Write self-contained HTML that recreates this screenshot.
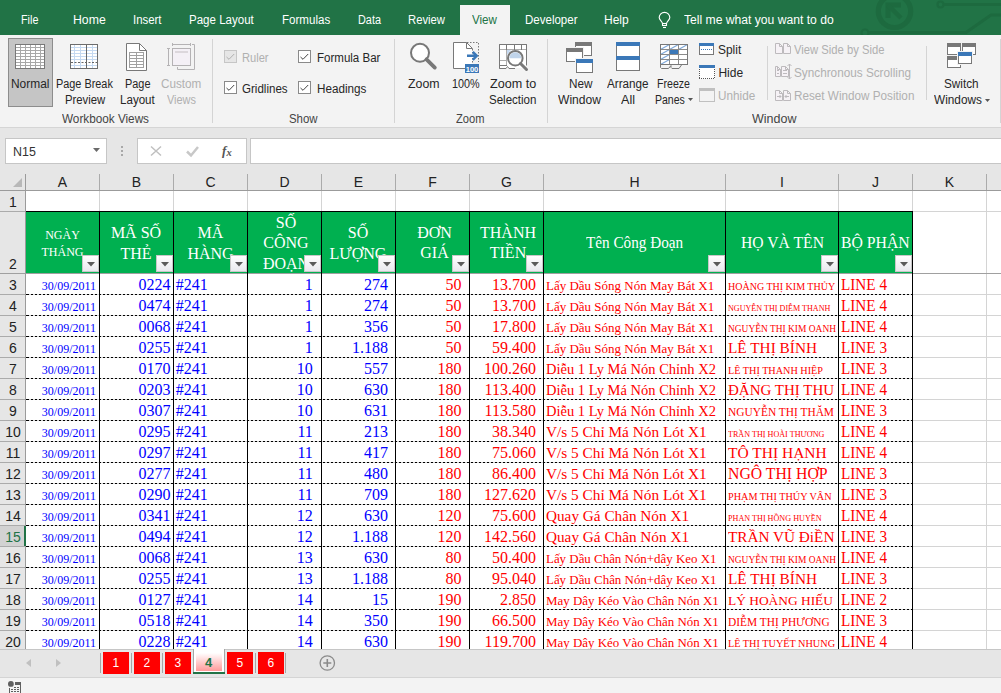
<!DOCTYPE html>
<html><head><meta charset="utf-8"><style>
html,body{margin:0;padding:0;}
body{width:1001px;height:693px;overflow:hidden;position:relative;background:#fff;font-family:"Liberation Sans",sans-serif;}
.t{position:absolute;white-space:nowrap;line-height:1;transform-origin:0 0;}
svg{overflow:visible}
</style></head><body>
<div style="position:absolute;left:0px;top:0px;width:1001px;height:35px;background:#217346"></div>
<div style="position:absolute;left:0px;top:35px;width:1001px;height:92px;background:#f3f3f3"></div>
<div style="position:absolute;left:0px;top:127px;width:1001px;height:1px;background:#d5d5d5"></div>
<div style="position:absolute;left:0px;top:128px;width:1001px;height:46px;background:#e6e6e6"></div>
<div style="position:absolute;left:460px;top:5px;width:50px;height:30px;background:#f3f3f3"></div>
<div class="t" style="left:20.70px;top:14.00px;font-size:12.5px;color:#fff;transform:scaleX(0.8635);">File</div>
<div class="t" style="left:73.40px;top:14.00px;font-size:12.5px;color:#fff;transform:scaleX(0.9805);">Home</div>
<div class="t" style="left:133.20px;top:14.00px;font-size:12.5px;color:#fff;transform:scaleX(0.9120);">Insert</div>
<div class="t" style="left:189.20px;top:14.00px;font-size:12.5px;color:#fff;transform:scaleX(0.9231);">Page Layout</div>
<div class="t" style="left:281.60px;top:14.00px;font-size:12.5px;color:#fff;transform:scaleX(0.9251);">Formulas</div>
<div class="t" style="left:357.50px;top:14.00px;font-size:12.5px;color:#fff;transform:scaleX(0.8696);">Data</div>
<div class="t" style="left:408.00px;top:14.00px;font-size:12.5px;color:#fff;transform:scaleX(0.9013);">Review</div>
<div class="t" style="left:524.50px;top:14.00px;font-size:12.5px;color:#fff;transform:scaleX(0.9211);">Developer</div>
<div class="t" style="left:604.30px;top:14.00px;font-size:12.5px;color:#fff;transform:scaleX(0.9611);">Help</div>
<div class="t" style="left:684.30px;top:14.00px;font-size:12.5px;color:#fff;transform:scaleX(0.9705);">Tell me what you want to do</div>
<div class="t" style="left:472.00px;top:14.00px;font-size:12.5px;color:#217346;transform:scaleX(0.9276);">View</div>
<div style="position:absolute;left:5px;top:138px;width:100px;height:24px;background:#fff;border:1px solid #c6c6c6"></div>
<div style="position:absolute;left:137px;top:138px;width:108px;height:24px;background:#fff;border:1px solid #c6c6c6"></div>
<div style="position:absolute;left:250px;top:138px;width:760px;height:24px;background:#fff;border:1px solid #c6c6c6"></div>
<div class="t" style="left:12.80px;top:146.00px;font-size:12px;color:#333;transform:scaleX(1.0364);">N15</div>
<svg style="position:absolute;left:93px;top:148px" width="7" height="4" viewBox="0 0 7 4"><path d="M0 0 H7 L3.5 4 Z" fill="#6a6a6a"/></svg>
<div style="position:absolute;left:121px;top:146px;width:2px;height:2px;background:#a8a8a8"></div>
<div style="position:absolute;left:121px;top:150px;width:2px;height:2px;background:#a8a8a8"></div>
<div style="position:absolute;left:121px;top:154px;width:2px;height:2px;background:#a8a8a8"></div>
<svg style="position:absolute;left:150px;top:146px" width="12" height="10" viewBox="0 0 12 10"><path d="M1 0.5 L11 9.5 M11 0.5 L1 9.5" stroke="#c0c0c0" stroke-width="1.5"/></svg>
<svg style="position:absolute;left:186px;top:146px" width="13" height="11" viewBox="0 0 13 11"><path d="M1 5.5 L5 9.5 L12 1" fill="none" stroke="#c8c8c8" stroke-width="2.5"/></svg>
<svg style="position:absolute;left:221px;top:144px" width="14" height="14" viewBox="0 0 14 14"><text x="1" y="10.5" font-family="Liberation Serif" font-style="italic" font-weight="bold" font-size="13" fill="#555">f</text><text x="5.6" y="11.5" font-family="Liberation Serif" font-style="italic" font-weight="bold" font-size="10.5" fill="#555">x</text></svg>
<div style="position:absolute;left:0px;top:174px;width:1001px;height:16px;background:#e6e6e6"></div>
<div style="position:absolute;left:0px;top:190px;width:1001px;height:1px;background:#9b9b9b"></div>
<div style="position:absolute;left:0px;top:191px;width:25px;height:458px;background:#e6e6e6"></div>
<div style="position:absolute;left:25px;top:174px;width:1px;height:475px;background:#9b9b9b"></div>
<div style="position:absolute;left:8px;top:38px;width:43px;height:67px;background:#c5c5c5;border:1px solid #8d8d8d"></div>
<div class="t" style="left:10.75px;top:78.00px;font-size:12px;color:#262626;transform:scaleX(0.9948);">Normal</div>
<div class="t" style="left:55.60px;top:78.00px;font-size:12px;color:#262626;transform:scaleX(0.9068);">Page Break</div>
<div class="t" style="left:64.50px;top:94.00px;font-size:12px;color:#262626;transform:scaleX(0.9415);">Preview</div>
<div class="t" style="left:124.50px;top:78.00px;font-size:12px;color:#262626;transform:scaleX(0.9091);">Page</div>
<div class="t" style="left:120.00px;top:94.00px;font-size:12px;color:#262626;transform:scaleX(0.9653);">Layout</div>
<div class="t" style="left:160.70px;top:78.00px;font-size:12px;color:#b0b0b0;transform:scaleX(0.9746);">Custom</div>
<div class="t" style="left:166.70px;top:94.00px;font-size:12px;color:#b0b0b0;transform:scaleX(0.9119);">Views</div>
<div class="t" style="left:62.40px;top:113.00px;font-size:12px;color:#444;transform:scaleX(0.9781);">Workbook Views</div>
<div style="position:absolute;left:212px;top:39px;width:1px;height:84px;background:#d4d4d4"></div>
<div style="position:absolute;left:394px;top:39px;width:1px;height:84px;background:#d4d4d4"></div>
<div style="position:absolute;left:547px;top:39px;width:1px;height:84px;background:#d4d4d4"></div>
<div style="position:absolute;left:767px;top:46px;width:1px;height:54px;background:#d4d4d4"></div>
<div style="position:absolute;left:926px;top:46px;width:1px;height:54px;background:#d4d4d4"></div>
<div style="position:absolute;left:1000px;top:39px;width:1px;height:84px;background:#d4d4d4"></div>
<div class="t" style="left:242.40px;top:52.00px;font-size:12px;color:#b0b0b0;transform:scaleX(0.9268);">Ruler</div>
<div class="t" style="left:316.60px;top:52.00px;font-size:12px;color:#262626;transform:scaleX(0.9606);">Formula Bar</div>
<div class="t" style="left:242.40px;top:83.00px;font-size:12px;color:#262626;transform:scaleX(0.9630);">Gridlines</div>
<div class="t" style="left:316.60px;top:83.00px;font-size:12px;color:#262626;transform:scaleX(0.9744);">Headings</div>
<div class="t" style="left:289.40px;top:113.00px;font-size:12px;color:#444;transform:scaleX(0.9517);">Show</div>
<div class="t" style="left:407.90px;top:78.00px;font-size:12px;color:#262626;transform:scaleX(1.0293);">Zoom</div>
<div class="t" style="left:452.40px;top:78.00px;font-size:12px;color:#262626;transform:scaleX(0.8990);">100%</div>
<div class="t" style="left:489.80px;top:78.00px;font-size:12px;color:#262626;transform:scaleX(1.0500);">Zoom to</div>
<div class="t" style="left:489.00px;top:94.00px;font-size:12px;color:#262626;transform:scaleX(0.9605);">Selection</div>
<div class="t" style="left:456.00px;top:113.00px;font-size:12px;color:#444;transform:scaleX(0.9283);">Zoom</div>
<div class="t" style="left:568.50px;top:78.00px;font-size:12px;color:#262626;transform:scaleX(0.9771);">New</div>
<div class="t" style="left:558.40px;top:94.00px;font-size:12px;color:#262626;transform:scaleX(1.0070);">Window</div>
<div class="t" style="left:607.00px;top:78.00px;font-size:12px;color:#262626;transform:scaleX(0.9742);">Arrange</div>
<div class="t" style="left:621.00px;top:94.00px;font-size:12px;color:#262626;transform:scaleX(1.0487);">All</div>
<div class="t" style="left:657.00px;top:78.00px;font-size:12px;color:#262626;transform:scaleX(0.8835);">Freeze</div>
<div class="t" style="left:654.50px;top:94.00px;font-size:12px;color:#262626;transform:scaleX(0.8752);">Panes</div>
<div class="t" style="left:717.80px;top:44.00px;font-size:12px;color:#262626;transform:scaleX(0.9936);">Split</div>
<div class="t" style="left:718.40px;top:67.00px;font-size:12px;color:#262626;">Hide</div>
<div class="t" style="left:718.40px;top:90.00px;font-size:12px;color:#b0b0b0;transform:scaleX(0.9777);">Unhide</div>
<div class="t" style="left:794.30px;top:44.00px;font-size:12px;color:#b0b0b0;transform:scaleX(0.9378);">View Side by Side</div>
<div class="t" style="left:794.30px;top:67.00px;font-size:12px;color:#b0b0b0;transform:scaleX(0.9799);">Synchronous Scrolling</div>
<div class="t" style="left:794.30px;top:90.00px;font-size:12px;color:#b0b0b0;transform:scaleX(0.9757);">Reset Window Position</div>
<div class="t" style="left:944.00px;top:78.00px;font-size:12px;color:#262626;transform:scaleX(0.9788);">Switch</div>
<div class="t" style="left:933.70px;top:94.00px;font-size:12px;color:#262626;transform:scaleX(0.9836);">Windows</div>
<div class="t" style="left:751.80px;top:113.00px;font-size:12px;color:#444;transform:scaleX(1.0422);">Window</div>
<svg style="position:absolute;left:15px;top:44px" width="30" height="25" viewBox="0 0 30 25"><rect x="0.5" y="0.5" width="29" height="24" fill="#fff" stroke="#787878"/><line x1="5.5" y1="0" x2="5.5" y2="25" stroke="#a8a8a8"/><line x1="10.5" y1="0" x2="10.5" y2="25" stroke="#a8a8a8"/><line x1="15.5" y1="0" x2="15.5" y2="25" stroke="#a8a8a8"/><line x1="20.5" y1="0" x2="20.5" y2="25" stroke="#a8a8a8"/><line x1="25.5" y1="0" x2="25.5" y2="25" stroke="#a8a8a8"/><line x1="0" y1="3.5" x2="30" y2="3.5" stroke="#a8a8a8"/><line x1="0" y1="6.5" x2="30" y2="6.5" stroke="#a8a8a8"/><line x1="0" y1="9.5" x2="30" y2="9.5" stroke="#a8a8a8"/><line x1="0" y1="12.5" x2="30" y2="12.5" stroke="#a8a8a8"/><line x1="0" y1="15.5" x2="30" y2="15.5" stroke="#a8a8a8"/><line x1="0" y1="18.5" x2="30" y2="18.5" stroke="#a8a8a8"/><line x1="0" y1="21.5" x2="30" y2="21.5" stroke="#a8a8a8"/><rect x="0.5" y="0.5" width="29" height="24" fill="none" stroke="#787878"/></svg>
<svg style="position:absolute;left:70px;top:44px" width="28" height="25" viewBox="0 0 28 25"><rect x="0.5" y="0.5" width="27" height="24" fill="#fff"/><line x1="4.5" y1="0" x2="4.5" y2="25" stroke="#c5d9f1"/><line x1="10.5" y1="0" x2="10.5" y2="25" stroke="#c5d9f1"/><line x1="22.5" y1="0" x2="22.5" y2="25" stroke="#c5d9f1"/><line x1="0" y1="3.5" x2="28" y2="3.5" stroke="#c5d9f1"/><line x1="0" y1="6.5" x2="28" y2="6.5" stroke="#c5d9f1"/><line x1="0" y1="9.5" x2="28" y2="9.5" stroke="#c5d9f1"/><line x1="0" y1="12.5" x2="28" y2="12.5" stroke="#c5d9f1"/><line x1="0" y1="15.5" x2="28" y2="15.5" stroke="#c5d9f1"/><line x1="0" y1="21.5" x2="28" y2="21.5" stroke="#c5d9f1"/><line x1="16.5" y1="0" x2="16.5" y2="25" stroke="#666"/><line x1="1" y1="18.5" x2="27" y2="18.5" stroke="#666" stroke-dasharray="2,1.5"/><rect x="0.5" y="0.5" width="27" height="24" fill="none" stroke="#6d6d6d"/></svg>
<svg style="position:absolute;left:126px;top:43px" width="21" height="28" viewBox="0 0 21 28"><path d="M0.5 0.5 H13.5 L20.5 7.5 V27.5 H0.5 Z" fill="#fff" stroke="#787878"/><path d="M13.5 0.5 V7.5 H20.5" fill="none" stroke="#787878"/><rect x="3.5" y="9.5" width="14" height="15" fill="#fff" stroke="#a0a0a0"/><line x1="10.5" y1="9" x2="10.5" y2="25" stroke="#a0a0a0"/><line x1="3" y1="12.5" x2="18" y2="12.5" stroke="#a0a0a0"/><line x1="3" y1="15.5" x2="18" y2="15.5" stroke="#a0a0a0"/><line x1="3" y1="18.5" x2="18" y2="18.5" stroke="#a0a0a0"/><line x1="3" y1="21.5" x2="18" y2="21.5" stroke="#a0a0a0"/></svg>
<svg style="position:absolute;left:166px;top:42px" width="30" height="28" viewBox="0 0 30 28"><rect x="6.5" y="6.5" width="18" height="17" fill="#f4f0f6" stroke="#b4b2b4"/><rect x="9" y="9" width="13" height="2" fill="#dcd7dc"/><path d="M6.5 2.5 H24.5 M6.5 1 V4 M24.5 1 V4" fill="none" stroke="#b4b2b4"/><path d="M2.5 6.5 V23.5 M1 6.5 H4 M1 23.5 H4" fill="none" stroke="#b4b2b4"/><path d="M26 2.5 H28.5 V27.5 H11.5 V25" fill="none" stroke="#b4b2b4"/></svg>
<svg style="position:absolute;left:224px;top:50px" width="13" height="13" viewBox="0 0 13 13"><rect x="0.5" y="0.5" width="12" height="12" fill="#e6e6e6" stroke="#c6c6c6"/><path d="M2.5 7 L5 9.3 L10.2 4" fill="none" stroke="#b0b0b0" stroke-width="1"/></svg>
<svg style="position:absolute;left:298px;top:50px" width="13" height="13" viewBox="0 0 13 13"><rect x="0.5" y="0.5" width="12" height="12" fill="#fff" stroke="#8a8a8a"/><path d="M2.5 7 L5 9.3 L10.2 4" fill="none" stroke="#444" stroke-width="1"/></svg>
<svg style="position:absolute;left:224px;top:81px" width="13" height="13" viewBox="0 0 13 13"><rect x="0.5" y="0.5" width="12" height="12" fill="#fff" stroke="#8a8a8a"/><path d="M2.5 7 L5 9.3 L10.2 4" fill="none" stroke="#444" stroke-width="1"/></svg>
<svg style="position:absolute;left:298px;top:81px" width="13" height="13" viewBox="0 0 13 13"><rect x="0.5" y="0.5" width="12" height="12" fill="#fff" stroke="#8a8a8a"/><path d="M2.5 7 L5 9.3 L10.2 4" fill="none" stroke="#444" stroke-width="1"/></svg>
<svg style="position:absolute;left:409px;top:42px" width="28" height="28" viewBox="0 0 28 28"><circle cx="11" cy="10.8" r="9" fill="#fff" stroke="#787878" stroke-width="2"/><line x1="17.5" y1="17.3" x2="25.8" y2="25.6" stroke="#787878" stroke-width="3.8" stroke-linecap="round"/></svg>
<svg style="position:absolute;left:452px;top:41px" width="30" height="33" viewBox="0 0 30 33"><path d="M1.5 1.5 H14.5 L20.5 7.5 V27.5 H1.5 Z" fill="#fff"/><path d="M13 27.5 H1.5 V1.5 H14.5 L20.5 7.5" fill="none" stroke="#787878"/><path d="M14.5 1.5 V7.5 H20.5" fill="none" stroke="#787878"/><path d="M15 1.5 H26.5 V21 M20.5 8 V23" fill="none" stroke="#787878" stroke-dasharray="1.5,1.5"/><path d="M15 14.8 H24.5 M20.8 10.8 L24.8 14.8 L20.8 18.8" fill="none" stroke="#3b78b8" stroke-width="2.4"/><rect x="13" y="23" width="14" height="9" fill="#3b78b8"/><text x="20" y="30.6" font-size="7.5" font-weight="bold" text-anchor="middle" fill="#fff" font-family="Liberation Sans">100</text></svg>
<svg style="position:absolute;left:499px;top:44px" width="30" height="28" viewBox="0 0 30 28"><path d="M0.5 24.5 V0.5 H27.5 V21" fill="#fff" stroke="#787878"/><rect x="1" y="1" width="26" height="23" fill="#fff"/><path d="M0.5 24.5 V0.5 H27.5 V21.5 M0.5 24.5 H7 L8.5 22.5 L10 24.5 H16" fill="none" stroke="#787878"/><line x1="7.5" y1="1" x2="7.5" y2="6" stroke="#787878"/><line x1="15.5" y1="1" x2="15.5" y2="6" stroke="#787878"/><line x1="22.5" y1="1" x2="22.5" y2="6" stroke="#787878"/><line x1="1" y1="5.5" x2="27" y2="5.5" stroke="#787878" stroke-opacity="0.6"/><line x1="1" y1="16.5" x2="7" y2="16.5" stroke="#787878" stroke-opacity="0.6"/><line x1="1" y1="21.5" x2="8" y2="21.5" stroke="#787878"/><line x1="7.5" y1="6" x2="7.5" y2="21" stroke="#787878" stroke-opacity="0.6"/><path d="M8 6 H12 L8 11 Z" fill="#c5d9f1"/><circle cx="16.3" cy="14.2" r="7.3" fill="#fff" stroke="#787878" stroke-width="2"/><path d="M10.3 14.2 A6 6 0 0 1 22.3 14.2 Z" fill="#c0d4ea"/><line x1="21.5" y1="19.5" x2="27.5" y2="25.5" stroke="#787878" stroke-width="3" stroke-linecap="round"/></svg>
<svg style="position:absolute;left:565px;top:41px" width="30" height="33" viewBox="0 0 30 33"><rect x="10.5" y="1.5" width="16" height="13" fill="#fff" stroke="#787878"/><rect x="10" y="1" width="17" height="4" fill="#787878"/><rect x="0" y="6" width="19" height="16" fill="#f3f3f3"/><rect x="1.5" y="7.5" width="16" height="13" fill="#fff" stroke="#787878"/><rect x="1" y="7" width="17" height="4" fill="#787878"/><rect x="10" y="17" width="19" height="16" fill="#f3f3f3"/><rect x="11.5" y="18.5" width="16" height="13" fill="#fff" stroke="#787878"/><rect x="11" y="18" width="17" height="4" fill="#3b78b8"/></svg>
<svg style="position:absolute;left:616px;top:42px" width="24" height="29" viewBox="0 0 24 29"><rect x="0.5" y="0.5" width="23" height="28" fill="#fff" stroke="#787878"/><rect x="0" y="0" width="24" height="4" fill="#3b78b8"/><rect x="0" y="14" width="24" height="4" fill="#3b78b8"/></svg>
<svg style="position:absolute;left:660px;top:44px" width="28" height="26" viewBox="0 0 28 26"><rect x="0.5" y="0.5" width="27" height="20" fill="#fff"/><rect x="10" y="6" width="8" height="4" fill="#3b78b8"/><line x1="0.5" y1="5.5" x2="9.5" y2="0.5" stroke="#7ea7d8" stroke-width="1.1"/><line x1="9.5" y1="5.5" x2="18.5" y2="0.5" stroke="#7ea7d8" stroke-width="1.1"/><line x1="18.5" y1="5.5" x2="27.5" y2="0.5" stroke="#7ea7d8" stroke-width="1.1"/><line x1="0.5" y1="10.5" x2="9.5" y2="5.5" stroke="#7ea7d8" stroke-width="1.1"/><line x1="0.5" y1="15.5" x2="9.5" y2="10.5" stroke="#7ea7d8" stroke-width="1.1"/><line x1="0.5" y1="20.5" x2="9.5" y2="15.5" stroke="#7ea7d8" stroke-width="1.1"/><line x1="9.5" y1="0" x2="9.5" y2="21" stroke="#8a8a8a"/><line x1="18.5" y1="0" x2="18.5" y2="21" stroke="#8a8a8a"/><line x1="0" y1="5.5" x2="28" y2="5.5" stroke="#8a8a8a"/><line x1="0" y1="10.5" x2="28" y2="10.5" stroke="#8a8a8a"/><line x1="0" y1="15.5" x2="28" y2="15.5" stroke="#8a8a8a"/><rect x="0.5" y="0.5" width="27" height="20" fill="none" stroke="#787878"/><path d="M0.5 21 V23.5 L1.5 24.5 H8.5 L11 21.5 M11 21.5 V23.5 L12 24.5 H19 L21.5 21" fill="none" stroke="#787878"/></svg>
<svg style="position:absolute;left:699px;top:43px" width="15" height="12" viewBox="0 0 15 12"><rect x="0.5" y="0.5" width="14" height="11" fill="#fff" stroke="#787878"/><rect x="0" y="0" width="15" height="3" fill="#3b78b8"/><line x1="2" y1="6.5" x2="13" y2="6.5" stroke="#3b78b8" stroke-dasharray="1,1"/></svg>
<svg style="position:absolute;left:699px;top:65px" width="16" height="14" viewBox="0 0 16 14"><rect x="0" y="0" width="16" height="14" fill="#fff"/><rect x="0" y="0" width="16" height="3" fill="#3b78b8"/><rect x="0" y="13" width="1" height="1" fill="#555"/><rect x="2" y="13" width="1" height="1" fill="#555"/><rect x="4" y="13" width="1" height="1" fill="#555"/><rect x="6" y="13" width="1" height="1" fill="#555"/><rect x="8" y="13" width="1" height="1" fill="#555"/><rect x="10" y="13" width="1" height="1" fill="#555"/><rect x="12" y="13" width="1" height="1" fill="#555"/><rect x="14" y="13" width="1" height="1" fill="#555"/><rect x="0" y="4" width="1" height="1" fill="#555"/><rect x="15" y="4" width="1" height="1" fill="#555"/><rect x="0" y="6" width="1" height="1" fill="#555"/><rect x="15" y="6" width="1" height="1" fill="#555"/><rect x="0" y="8" width="1" height="1" fill="#555"/><rect x="15" y="8" width="1" height="1" fill="#555"/><rect x="0" y="10" width="1" height="1" fill="#555"/><rect x="15" y="10" width="1" height="1" fill="#555"/><rect x="0" y="12" width="1" height="1" fill="#555"/><rect x="15" y="12" width="1" height="1" fill="#555"/></svg>
<svg style="position:absolute;left:699px;top:88px" width="16" height="14" viewBox="0 0 16 14"><rect x="0.5" y="0.5" width="15" height="13" fill="none" stroke="#c0c0c0"/><rect x="0" y="0" width="16" height="3" fill="#c0c0c0"/></svg>
<svg style="position:absolute;left:775px;top:43px" width="16" height="11" viewBox="0 0 16 11"><path d="M0.5 0.5 H4.5 L7.5 3.5 V10.5 H0.5 Z" fill="#f6f2f6" stroke="#bdbabd"/><path d="M4.5 0.5 V3.5 H7.5" fill="none" stroke="#bdbabd"/><path d="M8.5 0.5 H12.5 L15.5 3.5 V10.5 H8.5 Z" fill="#f6f2f6" stroke="#bdbabd"/><path d="M12.5 0.5 V3.5 H15.5" fill="none" stroke="#bdbabd"/></svg>
<svg style="position:absolute;left:775px;top:66px" width="17" height="11" viewBox="0 0 17 11"><path d="M0.5 0.5 H2.5 L5.5 3.5 V10.5 H0.5 Z" fill="#f6f2f6" stroke="#bdbabd"/><path d="M2.5 0.5 V3.5 H5.5" fill="none" stroke="#bdbabd"/><path d="M6.5 0.5 H10.5 L13.5 3.5 V10.5 H6.5 Z" fill="#f6f2f6" stroke="#bdbabd"/><path d="M10.5 0.5 V3.5 H13.5" fill="none" stroke="#bdbabd"/><path d="M14.5 -2 V13 M12.5 0 L14.5 -2 L16.5 0 M12.5 11 L14.5 13 L16.5 11" fill="none" stroke="#bdbabd"/><line x1="2" y1="4.5" x2="4" y2="4.5" stroke="#bdbabd"/><line x1="8" y1="4.5" x2="12" y2="4.5" stroke="#bdbabd"/><line x1="2" y1="7.5" x2="4" y2="7.5" stroke="#bdbabd"/><line x1="8" y1="7.5" x2="12" y2="7.5" stroke="#bdbabd"/></svg>
<svg style="position:absolute;left:775px;top:90px" width="16" height="11" viewBox="0 0 16 11"><path d="M0.5 0.5 H4.5 L7.5 3.5 V10.5 H0.5 Z" fill="#f6f2f6" stroke="#bdbabd"/><path d="M4.5 0.5 V3.5 H7.5" fill="none" stroke="#bdbabd"/><path d="M8.5 0.5 H12.5 L15.5 3.5 V10.5 H8.5 Z" fill="#f6f2f6" stroke="#bdbabd"/><path d="M12.5 0.5 V3.5 H15.5" fill="none" stroke="#bdbabd"/><path d="M2 6.5 H6 M4.5 5 L6 6.5 L4.5 8 M10 6.5 H14 M11.5 5 L10 6.5 L11.5 8" fill="none" stroke="#bdbabd"/></svg>
<svg style="position:absolute;left:947px;top:43px" width="30" height="26" viewBox="0 0 30 26"><rect x="0.5" y="0.5" width="13" height="11" fill="#fff" stroke="#787878"/><rect x="0" y="0" width="14" height="4" fill="#787878"/><rect x="15.5" y="0.5" width="13" height="11" fill="#fff" stroke="#787878"/><rect x="15" y="0" width="14" height="4" fill="#787878"/><rect x="0.5" y="13.5" width="13" height="11" fill="#fff" stroke="#787878"/><rect x="0" y="13" width="14" height="4" fill="#787878"/><rect x="10" y="8" width="16" height="14" fill="#f3f3f3"/><rect x="11.5" y="9.5" width="13" height="11" fill="#fff" stroke="#787878"/><rect x="11" y="9" width="14" height="4" fill="#3b78b8"/></svg>
<svg style="position:absolute;left:688px;top:98px" width="5" height="3" viewBox="0 0 5 3"><path d="M0 0 H5 L2.5 3 Z" fill="#555"/></svg>
<svg style="position:absolute;left:985px;top:99px" width="5" height="3" viewBox="0 0 5 3"><path d="M0 0 H5 L2.5 3 Z" fill="#555"/></svg>
<svg style="position:absolute;left:658px;top:11px" width="13" height="18" viewBox="0 0 13 18"><path d="M4.5 12.5 C4.2 10.6 1.2 8.8 1.2 6.6 A5.3 5.3 0 0 1 11.8 6.6 C11.8 8.8 8.8 10.6 8.5 12.5" fill="none" stroke="#fff" stroke-width="1.15"/><rect x="4.5" y="12.5" width="4" height="2" fill="none" stroke="#fff" stroke-width="1.1"/><path d="M5 16.5 H8" stroke="#fff" stroke-width="1.1"/></svg>
<div style="position:absolute;left:850px;top:0;width:151px;height:35px;overflow:hidden"><svg width="151" height="35"><circle cx="44.5" cy="11.3" r="16.2" fill="none" stroke="#1d6a3f" stroke-width="5.2"/><path d="M35.5 2.5 H51 V7.5 H40.5 V18 H35.5 Z" fill="#1d6a3f"/><path d="M38 5 L51 18" fill="none" stroke="#1d6a3f" stroke-width="4.5"/><circle cx="90.5" cy="4.5" r="3" fill="none" stroke="#1d6a3f" stroke-width="2.2"/><path d="M93.5 4.5 H160" fill="none" stroke="#1d6a3f" stroke-width="3.2"/><circle cx="15" cy="33" r="3.5" fill="none" stroke="#1d6a3f" stroke-width="2.2"/><path d="M18 32.5 H116 L141 15 H160" fill="none" stroke="#1d6a3f" stroke-width="3"/></svg></div>
<div style="position:absolute;left:99px;top:191px;width:1px;height:458px;background:#d4d4d4"></div>
<div style="position:absolute;left:173px;top:191px;width:1px;height:458px;background:#d4d4d4"></div>
<div style="position:absolute;left:247px;top:191px;width:1px;height:458px;background:#d4d4d4"></div>
<div style="position:absolute;left:321px;top:191px;width:1px;height:458px;background:#d4d4d4"></div>
<div style="position:absolute;left:395px;top:191px;width:1px;height:458px;background:#d4d4d4"></div>
<div style="position:absolute;left:469px;top:191px;width:1px;height:458px;background:#d4d4d4"></div>
<div style="position:absolute;left:543px;top:191px;width:1px;height:458px;background:#d4d4d4"></div>
<div style="position:absolute;left:725px;top:191px;width:1px;height:458px;background:#d4d4d4"></div>
<div style="position:absolute;left:838px;top:191px;width:1px;height:458px;background:#d4d4d4"></div>
<div style="position:absolute;left:912px;top:191px;width:1px;height:458px;background:#d4d4d4"></div>
<div style="position:absolute;left:986px;top:191px;width:1px;height:458px;background:#d4d4d4"></div>
<div style="position:absolute;left:986px;top:191px;width:0px;height:0px;"></div>
<div style="position:absolute;left:26px;top:211px;width:975px;height:1px;background:#d4d4d4"></div>
<div style="position:absolute;left:26px;top:273px;width:975px;height:1px;background:#d4d4d4"></div>
<div style="position:absolute;left:26px;top:294px;width:975px;height:1px;background:#d4d4d4"></div>
<div style="position:absolute;left:26px;top:315px;width:975px;height:1px;background:#d4d4d4"></div>
<div style="position:absolute;left:26px;top:336px;width:975px;height:1px;background:#d4d4d4"></div>
<div style="position:absolute;left:26px;top:357px;width:975px;height:1px;background:#d4d4d4"></div>
<div style="position:absolute;left:26px;top:378px;width:975px;height:1px;background:#d4d4d4"></div>
<div style="position:absolute;left:26px;top:399px;width:975px;height:1px;background:#d4d4d4"></div>
<div style="position:absolute;left:26px;top:420px;width:975px;height:1px;background:#d4d4d4"></div>
<div style="position:absolute;left:26px;top:441px;width:975px;height:1px;background:#d4d4d4"></div>
<div style="position:absolute;left:26px;top:462px;width:975px;height:1px;background:#d4d4d4"></div>
<div style="position:absolute;left:26px;top:483px;width:975px;height:1px;background:#d4d4d4"></div>
<div style="position:absolute;left:26px;top:504px;width:975px;height:1px;background:#d4d4d4"></div>
<div style="position:absolute;left:26px;top:525px;width:975px;height:1px;background:#d4d4d4"></div>
<div style="position:absolute;left:26px;top:546px;width:975px;height:1px;background:#d4d4d4"></div>
<div style="position:absolute;left:26px;top:567px;width:975px;height:1px;background:#d4d4d4"></div>
<div style="position:absolute;left:26px;top:588px;width:975px;height:1px;background:#d4d4d4"></div>
<div style="position:absolute;left:26px;top:609px;width:975px;height:1px;background:#d4d4d4"></div>
<div style="position:absolute;left:26px;top:630px;width:975px;height:1px;background:#d4d4d4"></div>
<div style="position:absolute;left:26px;top:651px;width:975px;height:1px;background:#d4d4d4"></div>
<div style="position:absolute;left:99px;top:174px;width:1px;height:16px;background:#ababab"></div>
<div style="position:absolute;left:173px;top:174px;width:1px;height:16px;background:#ababab"></div>
<div style="position:absolute;left:247px;top:174px;width:1px;height:16px;background:#ababab"></div>
<div style="position:absolute;left:321px;top:174px;width:1px;height:16px;background:#ababab"></div>
<div style="position:absolute;left:395px;top:174px;width:1px;height:16px;background:#ababab"></div>
<div style="position:absolute;left:469px;top:174px;width:1px;height:16px;background:#ababab"></div>
<div style="position:absolute;left:543px;top:174px;width:1px;height:16px;background:#ababab"></div>
<div style="position:absolute;left:725px;top:174px;width:1px;height:16px;background:#ababab"></div>
<div style="position:absolute;left:838px;top:174px;width:1px;height:16px;background:#ababab"></div>
<div style="position:absolute;left:912px;top:174px;width:1px;height:16px;background:#ababab"></div>
<div style="position:absolute;left:986px;top:174px;width:1px;height:16px;background:#ababab"></div>
<div class="t" style="left:57.83px;top:175.00px;font-size:14px;color:#222;">A</div>
<div class="t" style="left:131.82px;top:175.00px;font-size:14px;color:#222;">B</div>
<div class="t" style="left:205.45px;top:175.00px;font-size:14px;color:#222;">C</div>
<div class="t" style="left:279.45px;top:175.00px;font-size:14px;color:#222;">D</div>
<div class="t" style="left:353.82px;top:175.00px;font-size:14px;color:#222;">E</div>
<div class="t" style="left:428.23px;top:175.00px;font-size:14px;color:#222;">F</div>
<div class="t" style="left:501.05px;top:175.00px;font-size:14px;color:#222;">G</div>
<div class="t" style="left:629.45px;top:175.00px;font-size:14px;color:#222;">H</div>
<div class="t" style="left:780.05px;top:175.00px;font-size:14px;color:#222;">I</div>
<div class="t" style="left:872.00px;top:175.00px;font-size:14px;color:#222;">J</div>
<div class="t" style="left:944.83px;top:175.00px;font-size:14px;color:#222;">K</div>
<div class="t" style="left:1019.10px;top:175.00px;font-size:14px;color:#222;">L</div>
<svg style="position:absolute;left:13px;top:178px" width="10" height="9" viewBox="0 0 10 9"><path d="M9 0 V9 H0 Z" fill="#b8b8b8"/></svg>
<div class="t" style="left:9.10px;top:195.00px;font-size:14px;color:#222;">1</div>
<div style="position:absolute;left:0px;top:211px;width:25px;height:1px;background:#ababab"></div>
<div class="t" style="left:9.10px;top:257.00px;font-size:14px;color:#222;">2</div>
<div style="position:absolute;left:0px;top:273px;width:25px;height:1px;background:#ababab"></div>
<div class="t" style="left:9.10px;top:278.00px;font-size:14px;color:#222;">3</div>
<div style="position:absolute;left:0px;top:294px;width:25px;height:1px;background:#ababab"></div>
<div class="t" style="left:9.10px;top:299.00px;font-size:14px;color:#222;">4</div>
<div style="position:absolute;left:0px;top:315px;width:25px;height:1px;background:#ababab"></div>
<div class="t" style="left:9.10px;top:320.00px;font-size:14px;color:#222;">5</div>
<div style="position:absolute;left:0px;top:336px;width:25px;height:1px;background:#ababab"></div>
<div class="t" style="left:9.10px;top:341.00px;font-size:14px;color:#222;">6</div>
<div style="position:absolute;left:0px;top:357px;width:25px;height:1px;background:#ababab"></div>
<div class="t" style="left:9.10px;top:362.00px;font-size:14px;color:#222;">7</div>
<div style="position:absolute;left:0px;top:378px;width:25px;height:1px;background:#ababab"></div>
<div class="t" style="left:9.10px;top:383.00px;font-size:14px;color:#222;">8</div>
<div style="position:absolute;left:0px;top:399px;width:25px;height:1px;background:#ababab"></div>
<div class="t" style="left:9.10px;top:404.00px;font-size:14px;color:#222;">9</div>
<div style="position:absolute;left:0px;top:420px;width:25px;height:1px;background:#ababab"></div>
<div class="t" style="left:5.22px;top:425.00px;font-size:14px;color:#222;">10</div>
<div style="position:absolute;left:0px;top:441px;width:25px;height:1px;background:#ababab"></div>
<div class="t" style="left:5.72px;top:446.00px;font-size:14px;color:#222;">11</div>
<div style="position:absolute;left:0px;top:462px;width:25px;height:1px;background:#ababab"></div>
<div class="t" style="left:5.22px;top:467.00px;font-size:14px;color:#222;">12</div>
<div style="position:absolute;left:0px;top:483px;width:25px;height:1px;background:#ababab"></div>
<div class="t" style="left:5.22px;top:488.00px;font-size:14px;color:#222;">13</div>
<div style="position:absolute;left:0px;top:504px;width:25px;height:1px;background:#ababab"></div>
<div class="t" style="left:5.22px;top:509.00px;font-size:14px;color:#222;">14</div>
<div style="position:absolute;left:0px;top:525px;width:25px;height:1px;background:#ababab"></div>
<div style="position:absolute;left:0px;top:526px;width:24px;height:20px;background:#d2d2d2"></div>
<div style="position:absolute;left:24px;top:526px;width:2px;height:20px;background:#217346"></div>
<div class="t" style="left:5.22px;top:530.00px;font-size:14px;color:#217346;">15</div>
<div style="position:absolute;left:0px;top:546px;width:25px;height:1px;background:#ababab"></div>
<div class="t" style="left:5.22px;top:551.00px;font-size:14px;color:#222;">16</div>
<div style="position:absolute;left:0px;top:567px;width:25px;height:1px;background:#ababab"></div>
<div class="t" style="left:5.22px;top:572.00px;font-size:14px;color:#222;">17</div>
<div style="position:absolute;left:0px;top:588px;width:25px;height:1px;background:#ababab"></div>
<div class="t" style="left:5.22px;top:593.00px;font-size:14px;color:#222;">18</div>
<div style="position:absolute;left:0px;top:609px;width:25px;height:1px;background:#ababab"></div>
<div class="t" style="left:5.22px;top:614.00px;font-size:14px;color:#222;">19</div>
<div style="position:absolute;left:0px;top:630px;width:25px;height:1px;background:#ababab"></div>
<div class="t" style="left:5.22px;top:635.00px;font-size:14px;color:#222;">20</div>
<div style="position:absolute;left:0px;top:651px;width:25px;height:1px;background:#ababab"></div>
<div style="position:absolute;left:0px;top:273px;width:1001px;height:1px;background:#a0a0a0"></div>
<div style="position:absolute;left:26px;top:212px;width:886px;height:61px;background:#00b050"></div>
<div style="position:absolute;left:26px;top:211px;width:887px;height:1px;background:#000"></div>
<div style="position:absolute;left:99px;top:211px;width:1px;height:438px;background:#000"></div>
<div style="position:absolute;left:173px;top:211px;width:1px;height:438px;background:#000"></div>
<div style="position:absolute;left:247px;top:211px;width:1px;height:438px;background:#000"></div>
<div style="position:absolute;left:321px;top:211px;width:1px;height:438px;background:#000"></div>
<div style="position:absolute;left:395px;top:211px;width:1px;height:438px;background:#000"></div>
<div style="position:absolute;left:469px;top:211px;width:1px;height:438px;background:#000"></div>
<div style="position:absolute;left:543px;top:211px;width:1px;height:438px;background:#000"></div>
<div style="position:absolute;left:725px;top:211px;width:1px;height:438px;background:#000"></div>
<div style="position:absolute;left:838px;top:211px;width:1px;height:438px;background:#000"></div>
<div style="position:absolute;left:912px;top:211px;width:1px;height:438px;background:#000"></div>
<div class="t" style="left:45.17px;top:229.00px;font-size:12px;color:#fff;font-family:'Liberation Serif',serif;">NGÀY</div>
<div class="t" style="left:41.50px;top:246.00px;font-size:12px;color:#fff;font-family:'Liberation Serif',serif;">THÁNG</div>
<div class="t" style="left:110.88px;top:225.00px;font-size:16px;color:#fff;font-family:'Liberation Serif',serif;">MÃ SỐ</div>
<div class="t" style="left:120.45px;top:246.00px;font-size:16px;color:#fff;font-family:'Liberation Serif',serif;">THẺ</div>
<div class="t" style="left:197.60px;top:225.00px;font-size:16px;color:#fff;font-family:'Liberation Serif',serif;">MÃ</div>
<div class="t" style="left:187.40px;top:246.00px;font-size:16px;color:#fff;font-family:'Liberation Serif',serif;">HÀNG</div>
<div class="t" style="left:275.77px;top:215.00px;font-size:16px;color:#fff;font-family:'Liberation Serif',serif;">SỐ</div>
<div class="t" style="left:263.32px;top:235.00px;font-size:16px;color:#fff;font-family:'Liberation Serif',serif;">CÔNG</div>
<div class="t" style="left:262.90px;top:256.00px;font-size:16px;color:#fff;font-family:'Liberation Serif',serif;">ĐOẠN</div>
<div class="t" style="left:347.77px;top:225.00px;font-size:16px;color:#fff;font-family:'Liberation Serif',serif;">SỐ</div>
<div class="t" style="left:329.57px;top:246.00px;font-size:16px;color:#fff;font-family:'Liberation Serif',serif;">LƯỢNG</div>
<div class="t" style="left:417.18px;top:225.00px;font-size:16px;color:#fff;font-family:'Liberation Serif',serif;">ĐƠN</div>
<div class="t" style="left:420.27px;top:245.00px;font-size:16px;color:#fff;font-family:'Liberation Serif',serif;">GIÁ</div>
<div class="t" style="left:480.00px;top:225.00px;font-size:16px;color:#fff;font-family:'Liberation Serif',serif;">THÀNH</div>
<div class="t" style="left:489.77px;top:245.00px;font-size:16px;color:#fff;font-family:'Liberation Serif',serif;">TIỀN</div>
<div class="t" style="left:586.40px;top:235.00px;font-size:16px;color:#fff;font-family:'Liberation Serif',serif;transform:scaleX(0.9501);">Tên Công Đoạn</div>
<div class="t" style="left:741.10px;top:235.00px;font-size:16px;color:#fff;font-family:'Liberation Serif',serif;transform:scaleX(0.9794);">HỌ VÀ TÊN</div>
<div class="t" style="left:840.80px;top:235.00px;font-size:16px;color:#fff;font-family:'Liberation Serif',serif;transform:scaleX(0.9842);">BỘ PHẬN</div>
<div style="position:absolute;left:82px;top:255px;width:15px;height:15px;border:1px solid #c8c8c8;background:linear-gradient(#fefefe,#e9e9ee)"></div>
<svg style="position:absolute;left:86.5px;top:262px" width="8" height="5" viewBox="0 0 8 5"><path d="M0 0 H8 L4 4.5 Z" fill="#5a5a5a"/></svg>
<div style="position:absolute;left:156px;top:255px;width:15px;height:15px;border:1px solid #c8c8c8;background:linear-gradient(#fefefe,#e9e9ee)"></div>
<svg style="position:absolute;left:160.5px;top:262px" width="8" height="5" viewBox="0 0 8 5"><path d="M0 0 H8 L4 4.5 Z" fill="#5a5a5a"/></svg>
<div style="position:absolute;left:230px;top:255px;width:15px;height:15px;border:1px solid #c8c8c8;background:linear-gradient(#fefefe,#e9e9ee)"></div>
<svg style="position:absolute;left:234.5px;top:262px" width="8" height="5" viewBox="0 0 8 5"><path d="M0 0 H8 L4 4.5 Z" fill="#5a5a5a"/></svg>
<div style="position:absolute;left:304px;top:255px;width:15px;height:15px;border:1px solid #c8c8c8;background:linear-gradient(#fefefe,#e9e9ee)"></div>
<svg style="position:absolute;left:308.5px;top:262px" width="8" height="5" viewBox="0 0 8 5"><path d="M0 0 H8 L4 4.5 Z" fill="#5a5a5a"/></svg>
<div style="position:absolute;left:378px;top:255px;width:15px;height:15px;border:1px solid #c8c8c8;background:linear-gradient(#fefefe,#e9e9ee)"></div>
<svg style="position:absolute;left:382.5px;top:262px" width="8" height="5" viewBox="0 0 8 5"><path d="M0 0 H8 L4 4.5 Z" fill="#5a5a5a"/></svg>
<div style="position:absolute;left:452px;top:255px;width:15px;height:15px;border:1px solid #c8c8c8;background:linear-gradient(#fefefe,#e9e9ee)"></div>
<svg style="position:absolute;left:456.5px;top:262px" width="8" height="5" viewBox="0 0 8 5"><path d="M0 0 H8 L4 4.5 Z" fill="#5a5a5a"/></svg>
<div style="position:absolute;left:526px;top:255px;width:15px;height:15px;border:1px solid #c8c8c8;background:linear-gradient(#fefefe,#e9e9ee)"></div>
<svg style="position:absolute;left:530.5px;top:262px" width="8" height="5" viewBox="0 0 8 5"><path d="M0 0 H8 L4 4.5 Z" fill="#5a5a5a"/></svg>
<div style="position:absolute;left:708px;top:255px;width:15px;height:15px;border:1px solid #c8c8c8;background:linear-gradient(#fefefe,#e9e9ee)"></div>
<svg style="position:absolute;left:712.5px;top:262px" width="8" height="5" viewBox="0 0 8 5"><path d="M0 0 H8 L4 4.5 Z" fill="#5a5a5a"/></svg>
<div style="position:absolute;left:821px;top:255px;width:15px;height:15px;border:1px solid #c8c8c8;background:linear-gradient(#fefefe,#e9e9ee)"></div>
<svg style="position:absolute;left:825.5px;top:262px" width="8" height="5" viewBox="0 0 8 5"><path d="M0 0 H8 L4 4.5 Z" fill="#5a5a5a"/></svg>
<div style="position:absolute;left:895px;top:255px;width:15px;height:15px;border:1px solid #c8c8c8;background:linear-gradient(#fefefe,#e9e9ee)"></div>
<svg style="position:absolute;left:899.5px;top:262px" width="8" height="5" viewBox="0 0 8 5"><path d="M0 0 H8 L4 4.5 Z" fill="#5a5a5a"/></svg>
<div class="t" style="left:41.80px;top:280.00px;font-size:12px;color:#0000ff;font-family:'Liberation Serif',serif;">30/09/2011</div>
<div class="t" style="left:138.50px;top:277.00px;font-size:16px;color:#0000ff;font-family:'Liberation Serif',serif;">0224</div>
<div class="t" style="left:175.80px;top:277.00px;font-size:16px;color:#0000ff;font-family:'Liberation Serif',serif;">#241</div>
<div class="t" style="left:304.80px;top:277.00px;font-size:16px;color:#0000ff;font-family:'Liberation Serif',serif;">1</div>
<div class="t" style="left:364.00px;top:277.00px;font-size:16px;color:#0000ff;font-family:'Liberation Serif',serif;">274</div>
<div class="t" style="left:445.50px;top:277.00px;font-size:16px;color:#ff0000;font-family:'Liberation Serif',serif;">50</div>
<div class="t" style="left:492.00px;top:277.00px;font-size:16px;color:#ff0000;font-family:'Liberation Serif',serif;">13.700</div>
<div class="t" style="left:546.00px;top:279.00px;font-size:13.0px;color:#ff0000;font-family:'Liberation Serif',serif;">Lấy Dầu Sóng Nón May Bát X1</div>
<div class="t" style="left:728.00px;top:282.00px;font-size:10.0px;color:#ff0000;font-family:'Liberation Serif',serif;">HOÀNG THỊ KIM THỦY</div>
<div class="t" style="left:841.00px;top:277.00px;font-size:16px;color:#ff0000;font-family:'Liberation Serif',serif;transform:scaleX(0.9494);">LINE 4</div>
<div style="position:absolute;left:26px;top:294px;width:886px;height:1px;background:repeating-linear-gradient(90deg,#000 0 2px,transparent 2px 4px);background-position:1px 0"></div>
<div class="t" style="left:41.80px;top:301.00px;font-size:12px;color:#0000ff;font-family:'Liberation Serif',serif;">30/09/2011</div>
<div class="t" style="left:138.50px;top:298.00px;font-size:16px;color:#0000ff;font-family:'Liberation Serif',serif;">0474</div>
<div class="t" style="left:175.80px;top:298.00px;font-size:16px;color:#0000ff;font-family:'Liberation Serif',serif;">#241</div>
<div class="t" style="left:304.80px;top:298.00px;font-size:16px;color:#0000ff;font-family:'Liberation Serif',serif;">1</div>
<div class="t" style="left:364.00px;top:298.00px;font-size:16px;color:#0000ff;font-family:'Liberation Serif',serif;">274</div>
<div class="t" style="left:445.50px;top:298.00px;font-size:16px;color:#ff0000;font-family:'Liberation Serif',serif;">50</div>
<div class="t" style="left:492.00px;top:298.00px;font-size:16px;color:#ff0000;font-family:'Liberation Serif',serif;">13.700</div>
<div class="t" style="left:546.00px;top:300.00px;font-size:13.0px;color:#ff0000;font-family:'Liberation Serif',serif;">Lấy Dầu Sóng Nón May Bát X1</div>
<div class="t" style="left:728.00px;top:305.00px;font-size:8.0px;color:#ff0000;font-family:'Liberation Serif',serif;transform:scaleX(1.0114);">NGUYỄN THỊ DIỄM THANH</div>
<div class="t" style="left:841.00px;top:298.00px;font-size:16px;color:#ff0000;font-family:'Liberation Serif',serif;transform:scaleX(0.9494);">LINE 4</div>
<div style="position:absolute;left:26px;top:315px;width:886px;height:1px;background:repeating-linear-gradient(90deg,#000 0 2px,transparent 2px 4px);background-position:1px 0"></div>
<div class="t" style="left:41.80px;top:322.00px;font-size:12px;color:#0000ff;font-family:'Liberation Serif',serif;">30/09/2011</div>
<div class="t" style="left:138.50px;top:319.00px;font-size:16px;color:#0000ff;font-family:'Liberation Serif',serif;">0068</div>
<div class="t" style="left:175.80px;top:319.00px;font-size:16px;color:#0000ff;font-family:'Liberation Serif',serif;">#241</div>
<div class="t" style="left:304.80px;top:319.00px;font-size:16px;color:#0000ff;font-family:'Liberation Serif',serif;">1</div>
<div class="t" style="left:364.00px;top:319.00px;font-size:16px;color:#0000ff;font-family:'Liberation Serif',serif;">356</div>
<div class="t" style="left:445.50px;top:319.00px;font-size:16px;color:#ff0000;font-family:'Liberation Serif',serif;">50</div>
<div class="t" style="left:492.00px;top:319.00px;font-size:16px;color:#ff0000;font-family:'Liberation Serif',serif;">17.800</div>
<div class="t" style="left:546.00px;top:321.00px;font-size:13.0px;color:#ff0000;font-family:'Liberation Serif',serif;">Lấy Dầu Sóng Nón May Bát X1</div>
<div class="t" style="left:728.00px;top:325.00px;font-size:9.5px;color:#ff0000;font-family:'Liberation Serif',serif;transform:scaleX(0.9926);">NGUYỄN THỊ KIM OANH</div>
<div class="t" style="left:841.00px;top:319.00px;font-size:16px;color:#ff0000;font-family:'Liberation Serif',serif;transform:scaleX(0.9494);">LINE 4</div>
<div style="position:absolute;left:26px;top:336px;width:886px;height:1px;background:repeating-linear-gradient(90deg,#000 0 2px,transparent 2px 4px);background-position:1px 0"></div>
<div class="t" style="left:41.80px;top:343.00px;font-size:12px;color:#0000ff;font-family:'Liberation Serif',serif;">30/09/2011</div>
<div class="t" style="left:138.50px;top:340.00px;font-size:16px;color:#0000ff;font-family:'Liberation Serif',serif;">0255</div>
<div class="t" style="left:175.80px;top:340.00px;font-size:16px;color:#0000ff;font-family:'Liberation Serif',serif;">#241</div>
<div class="t" style="left:304.80px;top:340.00px;font-size:16px;color:#0000ff;font-family:'Liberation Serif',serif;">1</div>
<div class="t" style="left:352.00px;top:340.00px;font-size:16px;color:#0000ff;font-family:'Liberation Serif',serif;">1.188</div>
<div class="t" style="left:445.50px;top:340.00px;font-size:16px;color:#ff0000;font-family:'Liberation Serif',serif;">50</div>
<div class="t" style="left:492.00px;top:340.00px;font-size:16px;color:#ff0000;font-family:'Liberation Serif',serif;">59.400</div>
<div class="t" style="left:546.00px;top:342.00px;font-size:13.0px;color:#ff0000;font-family:'Liberation Serif',serif;">Lấy Dầu Sóng Nón May Bát X1</div>
<div class="t" style="left:728.00px;top:340.00px;font-size:15.5px;color:#ff0000;font-family:'Liberation Serif',serif;transform:scaleX(0.9878);">LÊ THỊ BÍNH</div>
<div class="t" style="left:841.00px;top:340.00px;font-size:16px;color:#ff0000;font-family:'Liberation Serif',serif;transform:scaleX(0.9494);">LINE 3</div>
<div style="position:absolute;left:26px;top:357px;width:886px;height:1px;background:repeating-linear-gradient(90deg,#000 0 2px,transparent 2px 4px);background-position:1px 0"></div>
<div class="t" style="left:41.80px;top:364.00px;font-size:12px;color:#0000ff;font-family:'Liberation Serif',serif;">30/09/2011</div>
<div class="t" style="left:138.50px;top:361.00px;font-size:16px;color:#0000ff;font-family:'Liberation Serif',serif;">0170</div>
<div class="t" style="left:175.80px;top:361.00px;font-size:16px;color:#0000ff;font-family:'Liberation Serif',serif;">#241</div>
<div class="t" style="left:296.80px;top:361.00px;font-size:16px;color:#0000ff;font-family:'Liberation Serif',serif;">10</div>
<div class="t" style="left:364.00px;top:361.00px;font-size:16px;color:#0000ff;font-family:'Liberation Serif',serif;">557</div>
<div class="t" style="left:437.50px;top:361.00px;font-size:16px;color:#ff0000;font-family:'Liberation Serif',serif;">180</div>
<div class="t" style="left:484.00px;top:361.00px;font-size:16px;color:#ff0000;font-family:'Liberation Serif',serif;">100.260</div>
<div class="t" style="left:546.00px;top:362.00px;font-size:14.5px;color:#ff0000;font-family:'Liberation Serif',serif;">Diễu 1 Ly Má Nón Chỉnh X2</div>
<div class="t" style="left:728.00px;top:366.00px;font-size:10.0px;color:#ff0000;font-family:'Liberation Serif',serif;transform:scaleX(1.0188);">LÊ THỊ THANH HIỆP</div>
<div class="t" style="left:841.00px;top:361.00px;font-size:16px;color:#ff0000;font-family:'Liberation Serif',serif;transform:scaleX(0.9494);">LINE 3</div>
<div style="position:absolute;left:26px;top:378px;width:886px;height:1px;background:repeating-linear-gradient(90deg,#000 0 2px,transparent 2px 4px);background-position:1px 0"></div>
<div class="t" style="left:41.80px;top:385.00px;font-size:12px;color:#0000ff;font-family:'Liberation Serif',serif;">30/09/2011</div>
<div class="t" style="left:138.50px;top:382.00px;font-size:16px;color:#0000ff;font-family:'Liberation Serif',serif;">0203</div>
<div class="t" style="left:175.80px;top:382.00px;font-size:16px;color:#0000ff;font-family:'Liberation Serif',serif;">#241</div>
<div class="t" style="left:296.80px;top:382.00px;font-size:16px;color:#0000ff;font-family:'Liberation Serif',serif;">10</div>
<div class="t" style="left:364.00px;top:382.00px;font-size:16px;color:#0000ff;font-family:'Liberation Serif',serif;">630</div>
<div class="t" style="left:437.50px;top:382.00px;font-size:16px;color:#ff0000;font-family:'Liberation Serif',serif;">180</div>
<div class="t" style="left:484.60px;top:382.00px;font-size:16px;color:#ff0000;font-family:'Liberation Serif',serif;">113.400</div>
<div class="t" style="left:546.00px;top:383.00px;font-size:14.5px;color:#ff0000;font-family:'Liberation Serif',serif;">Diễu 1 Ly Má Nón Chỉnh X2</div>
<div class="t" style="left:728.00px;top:383.00px;font-size:15.0px;color:#ff0000;font-family:'Liberation Serif',serif;">ĐẶNG THỊ THU</div>
<div class="t" style="left:841.00px;top:382.00px;font-size:16px;color:#ff0000;font-family:'Liberation Serif',serif;transform:scaleX(0.9494);">LINE 4</div>
<div style="position:absolute;left:26px;top:399px;width:886px;height:1px;background:repeating-linear-gradient(90deg,#000 0 2px,transparent 2px 4px);background-position:1px 0"></div>
<div class="t" style="left:41.80px;top:406.00px;font-size:12px;color:#0000ff;font-family:'Liberation Serif',serif;">30/09/2011</div>
<div class="t" style="left:138.50px;top:403.00px;font-size:16px;color:#0000ff;font-family:'Liberation Serif',serif;">0307</div>
<div class="t" style="left:175.80px;top:403.00px;font-size:16px;color:#0000ff;font-family:'Liberation Serif',serif;">#241</div>
<div class="t" style="left:296.80px;top:403.00px;font-size:16px;color:#0000ff;font-family:'Liberation Serif',serif;">10</div>
<div class="t" style="left:364.00px;top:403.00px;font-size:16px;color:#0000ff;font-family:'Liberation Serif',serif;">631</div>
<div class="t" style="left:437.50px;top:403.00px;font-size:16px;color:#ff0000;font-family:'Liberation Serif',serif;">180</div>
<div class="t" style="left:484.60px;top:403.00px;font-size:16px;color:#ff0000;font-family:'Liberation Serif',serif;">113.580</div>
<div class="t" style="left:546.00px;top:404.00px;font-size:14.5px;color:#ff0000;font-family:'Liberation Serif',serif;">Diễu 1 Ly Má Nón Chỉnh X2</div>
<div class="t" style="left:728.00px;top:407.00px;font-size:11.5px;color:#ff0000;font-family:'Liberation Serif',serif;transform:scaleX(0.9916);">NGUYỄN THỊ THĂM</div>
<div class="t" style="left:841.00px;top:403.00px;font-size:16px;color:#ff0000;font-family:'Liberation Serif',serif;transform:scaleX(0.9494);">LINE 3</div>
<div style="position:absolute;left:26px;top:420px;width:886px;height:1px;background:repeating-linear-gradient(90deg,#000 0 2px,transparent 2px 4px);background-position:1px 0"></div>
<div class="t" style="left:41.80px;top:427.00px;font-size:12px;color:#0000ff;font-family:'Liberation Serif',serif;">30/09/2011</div>
<div class="t" style="left:138.50px;top:424.00px;font-size:16px;color:#0000ff;font-family:'Liberation Serif',serif;">0295</div>
<div class="t" style="left:175.80px;top:424.00px;font-size:16px;color:#0000ff;font-family:'Liberation Serif',serif;">#241</div>
<div class="t" style="left:297.40px;top:424.00px;font-size:16px;color:#0000ff;font-family:'Liberation Serif',serif;">11</div>
<div class="t" style="left:364.00px;top:424.00px;font-size:16px;color:#0000ff;font-family:'Liberation Serif',serif;">213</div>
<div class="t" style="left:437.50px;top:424.00px;font-size:16px;color:#ff0000;font-family:'Liberation Serif',serif;">180</div>
<div class="t" style="left:492.00px;top:424.00px;font-size:16px;color:#ff0000;font-family:'Liberation Serif',serif;">38.340</div>
<div class="t" style="left:546.00px;top:424.00px;font-size:15.5px;color:#ff0000;font-family:'Liberation Serif',serif;transform:scaleX(0.9874);">V/s 5 Chỉ Má Nón Lót X1</div>
<div class="t" style="left:728.00px;top:431.00px;font-size:8.0px;color:#ff0000;font-family:'Liberation Serif',serif;transform:scaleX(1.0147);">TRẦN THỊ HOÀI THƯƠNG</div>
<div class="t" style="left:841.00px;top:424.00px;font-size:16px;color:#ff0000;font-family:'Liberation Serif',serif;transform:scaleX(0.9494);">LINE 4</div>
<div style="position:absolute;left:26px;top:441px;width:886px;height:1px;background:repeating-linear-gradient(90deg,#000 0 2px,transparent 2px 4px);background-position:1px 0"></div>
<div class="t" style="left:41.80px;top:448.00px;font-size:12px;color:#0000ff;font-family:'Liberation Serif',serif;">30/09/2011</div>
<div class="t" style="left:138.50px;top:445.00px;font-size:16px;color:#0000ff;font-family:'Liberation Serif',serif;">0297</div>
<div class="t" style="left:175.80px;top:445.00px;font-size:16px;color:#0000ff;font-family:'Liberation Serif',serif;">#241</div>
<div class="t" style="left:297.40px;top:445.00px;font-size:16px;color:#0000ff;font-family:'Liberation Serif',serif;">11</div>
<div class="t" style="left:364.00px;top:445.00px;font-size:16px;color:#0000ff;font-family:'Liberation Serif',serif;">417</div>
<div class="t" style="left:437.50px;top:445.00px;font-size:16px;color:#ff0000;font-family:'Liberation Serif',serif;">180</div>
<div class="t" style="left:492.00px;top:445.00px;font-size:16px;color:#ff0000;font-family:'Liberation Serif',serif;">75.060</div>
<div class="t" style="left:546.00px;top:445.00px;font-size:15.5px;color:#ff0000;font-family:'Liberation Serif',serif;transform:scaleX(0.9874);">V/s 5 Chỉ Má Nón Lót X1</div>
<div class="t" style="left:728.00px;top:445.00px;font-size:15.5px;color:#ff0000;font-family:'Liberation Serif',serif;">TÔ THỊ HẠNH</div>
<div class="t" style="left:841.00px;top:445.00px;font-size:16px;color:#ff0000;font-family:'Liberation Serif',serif;transform:scaleX(0.9494);">LINE 4</div>
<div style="position:absolute;left:26px;top:462px;width:886px;height:1px;background:repeating-linear-gradient(90deg,#000 0 2px,transparent 2px 4px);background-position:1px 0"></div>
<div class="t" style="left:41.80px;top:469.00px;font-size:12px;color:#0000ff;font-family:'Liberation Serif',serif;">30/09/2011</div>
<div class="t" style="left:138.50px;top:466.00px;font-size:16px;color:#0000ff;font-family:'Liberation Serif',serif;">0277</div>
<div class="t" style="left:175.80px;top:466.00px;font-size:16px;color:#0000ff;font-family:'Liberation Serif',serif;">#241</div>
<div class="t" style="left:297.40px;top:466.00px;font-size:16px;color:#0000ff;font-family:'Liberation Serif',serif;">11</div>
<div class="t" style="left:364.00px;top:466.00px;font-size:16px;color:#0000ff;font-family:'Liberation Serif',serif;">480</div>
<div class="t" style="left:437.50px;top:466.00px;font-size:16px;color:#ff0000;font-family:'Liberation Serif',serif;">180</div>
<div class="t" style="left:492.00px;top:466.00px;font-size:16px;color:#ff0000;font-family:'Liberation Serif',serif;">86.400</div>
<div class="t" style="left:546.00px;top:466.00px;font-size:15.5px;color:#ff0000;font-family:'Liberation Serif',serif;transform:scaleX(0.9874);">V/s 5 Chỉ Má Nón Lót X1</div>
<div class="t" style="left:728.00px;top:466.00px;font-size:16.0px;color:#ff0000;font-family:'Liberation Serif',serif;transform:scaleX(0.9857);">NGÔ THỊ HỢP</div>
<div class="t" style="left:841.00px;top:466.00px;font-size:16px;color:#ff0000;font-family:'Liberation Serif',serif;transform:scaleX(0.9494);">LINE 3</div>
<div style="position:absolute;left:26px;top:483px;width:886px;height:1px;background:repeating-linear-gradient(90deg,#000 0 2px,transparent 2px 4px);background-position:1px 0"></div>
<div class="t" style="left:41.80px;top:490.00px;font-size:12px;color:#0000ff;font-family:'Liberation Serif',serif;">30/09/2011</div>
<div class="t" style="left:138.50px;top:487.00px;font-size:16px;color:#0000ff;font-family:'Liberation Serif',serif;">0290</div>
<div class="t" style="left:175.80px;top:487.00px;font-size:16px;color:#0000ff;font-family:'Liberation Serif',serif;">#241</div>
<div class="t" style="left:297.40px;top:487.00px;font-size:16px;color:#0000ff;font-family:'Liberation Serif',serif;">11</div>
<div class="t" style="left:364.00px;top:487.00px;font-size:16px;color:#0000ff;font-family:'Liberation Serif',serif;">709</div>
<div class="t" style="left:437.50px;top:487.00px;font-size:16px;color:#ff0000;font-family:'Liberation Serif',serif;">180</div>
<div class="t" style="left:484.00px;top:487.00px;font-size:16px;color:#ff0000;font-family:'Liberation Serif',serif;">127.620</div>
<div class="t" style="left:546.00px;top:487.00px;font-size:15.5px;color:#ff0000;font-family:'Liberation Serif',serif;transform:scaleX(0.9874);">V/s 5 Chỉ Má Nón Lót X1</div>
<div class="t" style="left:728.00px;top:492.00px;font-size:10.0px;color:#ff0000;font-family:'Liberation Serif',serif;transform:scaleX(1.0197);">PHẠM THỊ THÚY VÂN</div>
<div class="t" style="left:841.00px;top:487.00px;font-size:16px;color:#ff0000;font-family:'Liberation Serif',serif;transform:scaleX(0.9494);">LINE 3</div>
<div style="position:absolute;left:26px;top:504px;width:886px;height:1px;background:repeating-linear-gradient(90deg,#000 0 2px,transparent 2px 4px);background-position:1px 0"></div>
<div class="t" style="left:41.80px;top:511.00px;font-size:12px;color:#0000ff;font-family:'Liberation Serif',serif;">30/09/2011</div>
<div class="t" style="left:138.50px;top:508.00px;font-size:16px;color:#0000ff;font-family:'Liberation Serif',serif;">0341</div>
<div class="t" style="left:175.80px;top:508.00px;font-size:16px;color:#0000ff;font-family:'Liberation Serif',serif;">#241</div>
<div class="t" style="left:296.80px;top:508.00px;font-size:16px;color:#0000ff;font-family:'Liberation Serif',serif;">12</div>
<div class="t" style="left:364.00px;top:508.00px;font-size:16px;color:#0000ff;font-family:'Liberation Serif',serif;">630</div>
<div class="t" style="left:437.50px;top:508.00px;font-size:16px;color:#ff0000;font-family:'Liberation Serif',serif;">120</div>
<div class="t" style="left:492.00px;top:508.00px;font-size:16px;color:#ff0000;font-family:'Liberation Serif',serif;">75.600</div>
<div class="t" style="left:546.00px;top:509.00px;font-size:15.0px;color:#ff0000;font-family:'Liberation Serif',serif;transform:scaleX(1.0156);">Quay Gá Chân Nón X1</div>
<div class="t" style="left:728.00px;top:515.00px;font-size:8.0px;color:#ff0000;font-family:'Liberation Serif',serif;transform:scaleX(1.0168);">PHAN THỊ HỒNG HUYỀN</div>
<div class="t" style="left:841.00px;top:508.00px;font-size:16px;color:#ff0000;font-family:'Liberation Serif',serif;transform:scaleX(0.9494);">LINE 4</div>
<div style="position:absolute;left:26px;top:525px;width:886px;height:1px;background:repeating-linear-gradient(90deg,#000 0 2px,transparent 2px 4px);background-position:1px 0"></div>
<div class="t" style="left:41.80px;top:532.00px;font-size:12px;color:#0000ff;font-family:'Liberation Serif',serif;">30/09/2011</div>
<div class="t" style="left:138.50px;top:529.00px;font-size:16px;color:#0000ff;font-family:'Liberation Serif',serif;">0494</div>
<div class="t" style="left:175.80px;top:529.00px;font-size:16px;color:#0000ff;font-family:'Liberation Serif',serif;">#241</div>
<div class="t" style="left:296.80px;top:529.00px;font-size:16px;color:#0000ff;font-family:'Liberation Serif',serif;">12</div>
<div class="t" style="left:352.00px;top:529.00px;font-size:16px;color:#0000ff;font-family:'Liberation Serif',serif;">1.188</div>
<div class="t" style="left:437.50px;top:529.00px;font-size:16px;color:#ff0000;font-family:'Liberation Serif',serif;">120</div>
<div class="t" style="left:484.00px;top:529.00px;font-size:16px;color:#ff0000;font-family:'Liberation Serif',serif;">142.560</div>
<div class="t" style="left:546.00px;top:530.00px;font-size:15.0px;color:#ff0000;font-family:'Liberation Serif',serif;transform:scaleX(1.0156);">Quay Gá Chân Nón X1</div>
<div class="t" style="left:728.00px;top:530.00px;font-size:15.0px;color:#ff0000;font-family:'Liberation Serif',serif;transform:scaleX(1.0162);">TRẦN VŨ ĐiỀN</div>
<div class="t" style="left:841.00px;top:529.00px;font-size:16px;color:#ff0000;font-family:'Liberation Serif',serif;transform:scaleX(0.9494);">LINE 3</div>
<div style="position:absolute;left:26px;top:546px;width:886px;height:1px;background:repeating-linear-gradient(90deg,#000 0 2px,transparent 2px 4px);background-position:1px 0"></div>
<div class="t" style="left:41.80px;top:553.00px;font-size:12px;color:#0000ff;font-family:'Liberation Serif',serif;">30/09/2011</div>
<div class="t" style="left:138.50px;top:550.00px;font-size:16px;color:#0000ff;font-family:'Liberation Serif',serif;">0068</div>
<div class="t" style="left:175.80px;top:550.00px;font-size:16px;color:#0000ff;font-family:'Liberation Serif',serif;">#241</div>
<div class="t" style="left:296.80px;top:550.00px;font-size:16px;color:#0000ff;font-family:'Liberation Serif',serif;">13</div>
<div class="t" style="left:364.00px;top:550.00px;font-size:16px;color:#0000ff;font-family:'Liberation Serif',serif;">630</div>
<div class="t" style="left:445.50px;top:550.00px;font-size:16px;color:#ff0000;font-family:'Liberation Serif',serif;">80</div>
<div class="t" style="left:492.00px;top:550.00px;font-size:16px;color:#ff0000;font-family:'Liberation Serif',serif;">50.400</div>
<div class="t" style="left:546.00px;top:552.00px;font-size:13.0px;color:#ff0000;font-family:'Liberation Serif',serif;transform:scaleX(0.9936);">Lấy Dầu Chân Nón+dây Keo X1</div>
<div class="t" style="left:728.00px;top:556.00px;font-size:9.5px;color:#ff0000;font-family:'Liberation Serif',serif;transform:scaleX(0.9926);">NGUYỄN THỊ KIM OANH</div>
<div class="t" style="left:841.00px;top:550.00px;font-size:16px;color:#ff0000;font-family:'Liberation Serif',serif;transform:scaleX(0.9494);">LINE 4</div>
<div style="position:absolute;left:26px;top:567px;width:886px;height:1px;background:repeating-linear-gradient(90deg,#000 0 2px,transparent 2px 4px);background-position:1px 0"></div>
<div class="t" style="left:41.80px;top:574.00px;font-size:12px;color:#0000ff;font-family:'Liberation Serif',serif;">30/09/2011</div>
<div class="t" style="left:138.50px;top:571.00px;font-size:16px;color:#0000ff;font-family:'Liberation Serif',serif;">0255</div>
<div class="t" style="left:175.80px;top:571.00px;font-size:16px;color:#0000ff;font-family:'Liberation Serif',serif;">#241</div>
<div class="t" style="left:296.80px;top:571.00px;font-size:16px;color:#0000ff;font-family:'Liberation Serif',serif;">13</div>
<div class="t" style="left:352.00px;top:571.00px;font-size:16px;color:#0000ff;font-family:'Liberation Serif',serif;">1.188</div>
<div class="t" style="left:445.50px;top:571.00px;font-size:16px;color:#ff0000;font-family:'Liberation Serif',serif;">80</div>
<div class="t" style="left:492.00px;top:571.00px;font-size:16px;color:#ff0000;font-family:'Liberation Serif',serif;">95.040</div>
<div class="t" style="left:546.00px;top:573.00px;font-size:13.0px;color:#ff0000;font-family:'Liberation Serif',serif;transform:scaleX(0.9936);">Lấy Dầu Chân Nón+dây Keo X1</div>
<div class="t" style="left:728.00px;top:571.00px;font-size:15.5px;color:#ff0000;font-family:'Liberation Serif',serif;transform:scaleX(0.9878);">LÊ THỊ BÍNH</div>
<div class="t" style="left:841.00px;top:571.00px;font-size:16px;color:#ff0000;font-family:'Liberation Serif',serif;transform:scaleX(0.9494);">LINE 3</div>
<div style="position:absolute;left:26px;top:588px;width:886px;height:1px;background:repeating-linear-gradient(90deg,#000 0 2px,transparent 2px 4px);background-position:1px 0"></div>
<div class="t" style="left:41.80px;top:595.00px;font-size:12px;color:#0000ff;font-family:'Liberation Serif',serif;">30/09/2011</div>
<div class="t" style="left:138.50px;top:592.00px;font-size:16px;color:#0000ff;font-family:'Liberation Serif',serif;">0127</div>
<div class="t" style="left:175.80px;top:592.00px;font-size:16px;color:#0000ff;font-family:'Liberation Serif',serif;">#241</div>
<div class="t" style="left:296.80px;top:592.00px;font-size:16px;color:#0000ff;font-family:'Liberation Serif',serif;">14</div>
<div class="t" style="left:372.00px;top:592.00px;font-size:16px;color:#0000ff;font-family:'Liberation Serif',serif;">15</div>
<div class="t" style="left:437.50px;top:592.00px;font-size:16px;color:#ff0000;font-family:'Liberation Serif',serif;">190</div>
<div class="t" style="left:500.00px;top:592.00px;font-size:16px;color:#ff0000;font-family:'Liberation Serif',serif;">2.850</div>
<div class="t" style="left:546.00px;top:594.00px;font-size:13.0px;color:#ff0000;font-family:'Liberation Serif',serif;transform:scaleX(0.9942);">May Dây Kéo Vào Chân Nón X1</div>
<div class="t" style="left:728.00px;top:594.00px;font-size:13.5px;color:#ff0000;font-family:'Liberation Serif',serif;transform:scaleX(0.9929);">LÝ HOÀNG HIẾU</div>
<div class="t" style="left:841.00px;top:592.00px;font-size:16px;color:#ff0000;font-family:'Liberation Serif',serif;transform:scaleX(0.9494);">LINE 2</div>
<div style="position:absolute;left:26px;top:609px;width:886px;height:1px;background:repeating-linear-gradient(90deg,#000 0 2px,transparent 2px 4px);background-position:1px 0"></div>
<div class="t" style="left:41.80px;top:616.00px;font-size:12px;color:#0000ff;font-family:'Liberation Serif',serif;">30/09/2011</div>
<div class="t" style="left:138.50px;top:613.00px;font-size:16px;color:#0000ff;font-family:'Liberation Serif',serif;">0518</div>
<div class="t" style="left:175.80px;top:613.00px;font-size:16px;color:#0000ff;font-family:'Liberation Serif',serif;">#241</div>
<div class="t" style="left:296.80px;top:613.00px;font-size:16px;color:#0000ff;font-family:'Liberation Serif',serif;">14</div>
<div class="t" style="left:364.00px;top:613.00px;font-size:16px;color:#0000ff;font-family:'Liberation Serif',serif;">350</div>
<div class="t" style="left:437.50px;top:613.00px;font-size:16px;color:#ff0000;font-family:'Liberation Serif',serif;">190</div>
<div class="t" style="left:492.00px;top:613.00px;font-size:16px;color:#ff0000;font-family:'Liberation Serif',serif;">66.500</div>
<div class="t" style="left:546.00px;top:615.00px;font-size:13.0px;color:#ff0000;font-family:'Liberation Serif',serif;transform:scaleX(0.9942);">May Dây Kéo Vào Chân Nón X1</div>
<div class="t" style="left:728.00px;top:617.00px;font-size:11.5px;color:#ff0000;font-family:'Liberation Serif',serif;transform:scaleX(0.9903);">DIỄM THỊ PHƯƠNG</div>
<div class="t" style="left:841.00px;top:613.00px;font-size:16px;color:#ff0000;font-family:'Liberation Serif',serif;transform:scaleX(0.9494);">LINE 3</div>
<div style="position:absolute;left:26px;top:630px;width:886px;height:1px;background:repeating-linear-gradient(90deg,#000 0 2px,transparent 2px 4px);background-position:1px 0"></div>
<div class="t" style="left:41.80px;top:637.00px;font-size:12px;color:#0000ff;font-family:'Liberation Serif',serif;">30/09/2011</div>
<div class="t" style="left:138.50px;top:634.00px;font-size:16px;color:#0000ff;font-family:'Liberation Serif',serif;">0228</div>
<div class="t" style="left:175.80px;top:634.00px;font-size:16px;color:#0000ff;font-family:'Liberation Serif',serif;">#241</div>
<div class="t" style="left:296.80px;top:634.00px;font-size:16px;color:#0000ff;font-family:'Liberation Serif',serif;">14</div>
<div class="t" style="left:364.00px;top:634.00px;font-size:16px;color:#0000ff;font-family:'Liberation Serif',serif;">630</div>
<div class="t" style="left:437.50px;top:634.00px;font-size:16px;color:#ff0000;font-family:'Liberation Serif',serif;">190</div>
<div class="t" style="left:484.60px;top:634.00px;font-size:16px;color:#ff0000;font-family:'Liberation Serif',serif;">119.700</div>
<div class="t" style="left:546.00px;top:636.00px;font-size:13.0px;color:#ff0000;font-family:'Liberation Serif',serif;transform:scaleX(0.9942);">May Dây Kéo Vào Chân Nón X1</div>
<div class="t" style="left:728.00px;top:639.00px;font-size:10.0px;color:#ff0000;font-family:'Liberation Serif',serif;transform:scaleX(1.0220);">LÊ THỊ TUYẾT NHUNG</div>
<div class="t" style="left:841.00px;top:634.00px;font-size:16px;color:#ff0000;font-family:'Liberation Serif',serif;transform:scaleX(0.9494);">LINE 4</div>
<div style="position:absolute;left:26px;top:651px;width:886px;height:1px;background:repeating-linear-gradient(90deg,#000 0 2px,transparent 2px 4px);background-position:1px 0"></div>
<div style="position:absolute;left:0px;top:649px;width:1001px;height:29px;background:#e6e6e6"></div>
<div style="position:absolute;left:0px;top:649px;width:1001px;height:1px;background:#c6c6c6"></div>
<div style="position:absolute;left:0px;top:677px;width:1001px;height:1px;background:#d4d4d4"></div>
<div style="position:absolute;left:0px;top:678px;width:1001px;height:15px;background:#f3f3f3"></div>
<svg style="position:absolute;left:26px;top:659px" width="5" height="8" viewBox="0 0 5 8"><path d="M5 0 V8 L0 4 Z" fill="#c0c0c0"/></svg>
<svg style="position:absolute;left:56px;top:659px" width="5" height="8" viewBox="0 0 5 8"><path d="M0 0 V8 L5 4 Z" fill="#c0c0c0"/></svg>
<div style="position:absolute;left:100px;top:653px;width:1px;height:20px;background:#a6a6a6"></div>
<div style="position:absolute;left:131px;top:653px;width:1px;height:20px;background:#a6a6a6"></div>
<div style="position:absolute;left:162px;top:653px;width:1px;height:20px;background:#a6a6a6"></div>
<div style="position:absolute;left:255px;top:653px;width:1px;height:20px;background:#a6a6a6"></div>
<div style="position:absolute;left:285px;top:653px;width:1px;height:20px;background:#a6a6a6"></div>
<div style="position:absolute;left:103px;top:652px;width:26px;height:22px;background:#ff0000"></div>
<div class="t" style="left:112.38px;top:657.00px;font-size:12px;color:#fff;">1</div>
<div style="position:absolute;left:134px;top:652px;width:26px;height:22px;background:#ff0000"></div>
<div class="t" style="left:143.38px;top:657.00px;font-size:12px;color:#fff;">2</div>
<div style="position:absolute;left:165px;top:652px;width:26px;height:22px;background:#ff0000"></div>
<div class="t" style="left:174.38px;top:657.00px;font-size:12px;color:#fff;">3</div>
<div style="position:absolute;left:227px;top:652px;width:26px;height:22px;background:#ff0000"></div>
<div class="t" style="left:236.38px;top:657.00px;font-size:12px;color:#fff;">5</div>
<div style="position:absolute;left:258px;top:652px;width:26px;height:22px;background:#ff0000"></div>
<div class="t" style="left:267.38px;top:657.00px;font-size:12px;color:#fff;">6</div>
<div style="position:absolute;left:193px;top:648px;width:32px;height:26px;background:#fff"></div>
<div style="position:absolute;left:193px;top:649px;width:1px;height:24px;background:#a6a6a6"></div>
<div style="position:absolute;left:224px;top:649px;width:1px;height:24px;background:#a6a6a6"></div>
<div style="position:absolute;left:196px;top:653px;width:26px;height:18px;background:linear-gradient(#ffffff,#ff9a9a)"></div>
<div style="position:absolute;left:193px;top:672px;width:32px;height:2px;background:#217346"></div>
<div class="t" style="left:204.88px;top:656.00px;font-size:13px;color:#217346;font-weight:bold;">4</div>
<svg style="position:absolute;left:319px;top:655px" width="17" height="17" viewBox="0 0 17 17"><circle cx="8.3" cy="8" r="7.2" fill="none" stroke="#8a8a8a" stroke-width="1.3"/><path d="M8.3 4 V12 M4.3 8 H12.3" stroke="#8a8a8a" stroke-width="1.6"/></svg>
<svg style="position:absolute;left:0px;top:676px" width="30" height="17" viewBox="0 0 30 17"><circle cx="10.9" cy="7.9" r="2.9" fill="#5f5f5f"/><rect x="15" y="6" width="6" height="3" fill="#5f5f5f"/><rect x="20" y="6" width="1" height="11" fill="#5f5f5f"/><rect x="9" y="12" width="1" height="5" fill="#5f5f5f"/><rect x="14" y="11" width="2" height="1" fill="#5f5f5f"/><rect x="17" y="11" width="2" height="1" fill="#5f5f5f"/><rect x="11" y="13" width="2" height="1" fill="#5f5f5f"/><rect x="14" y="13" width="2" height="1" fill="#5f5f5f"/><rect x="17" y="13" width="2" height="1" fill="#5f5f5f"/><rect x="11" y="15" width="2" height="1" fill="#5f5f5f"/><rect x="14" y="15" width="2" height="1" fill="#5f5f5f"/><rect x="17" y="15" width="2" height="1" fill="#5f5f5f"/></svg>
</body></html>
